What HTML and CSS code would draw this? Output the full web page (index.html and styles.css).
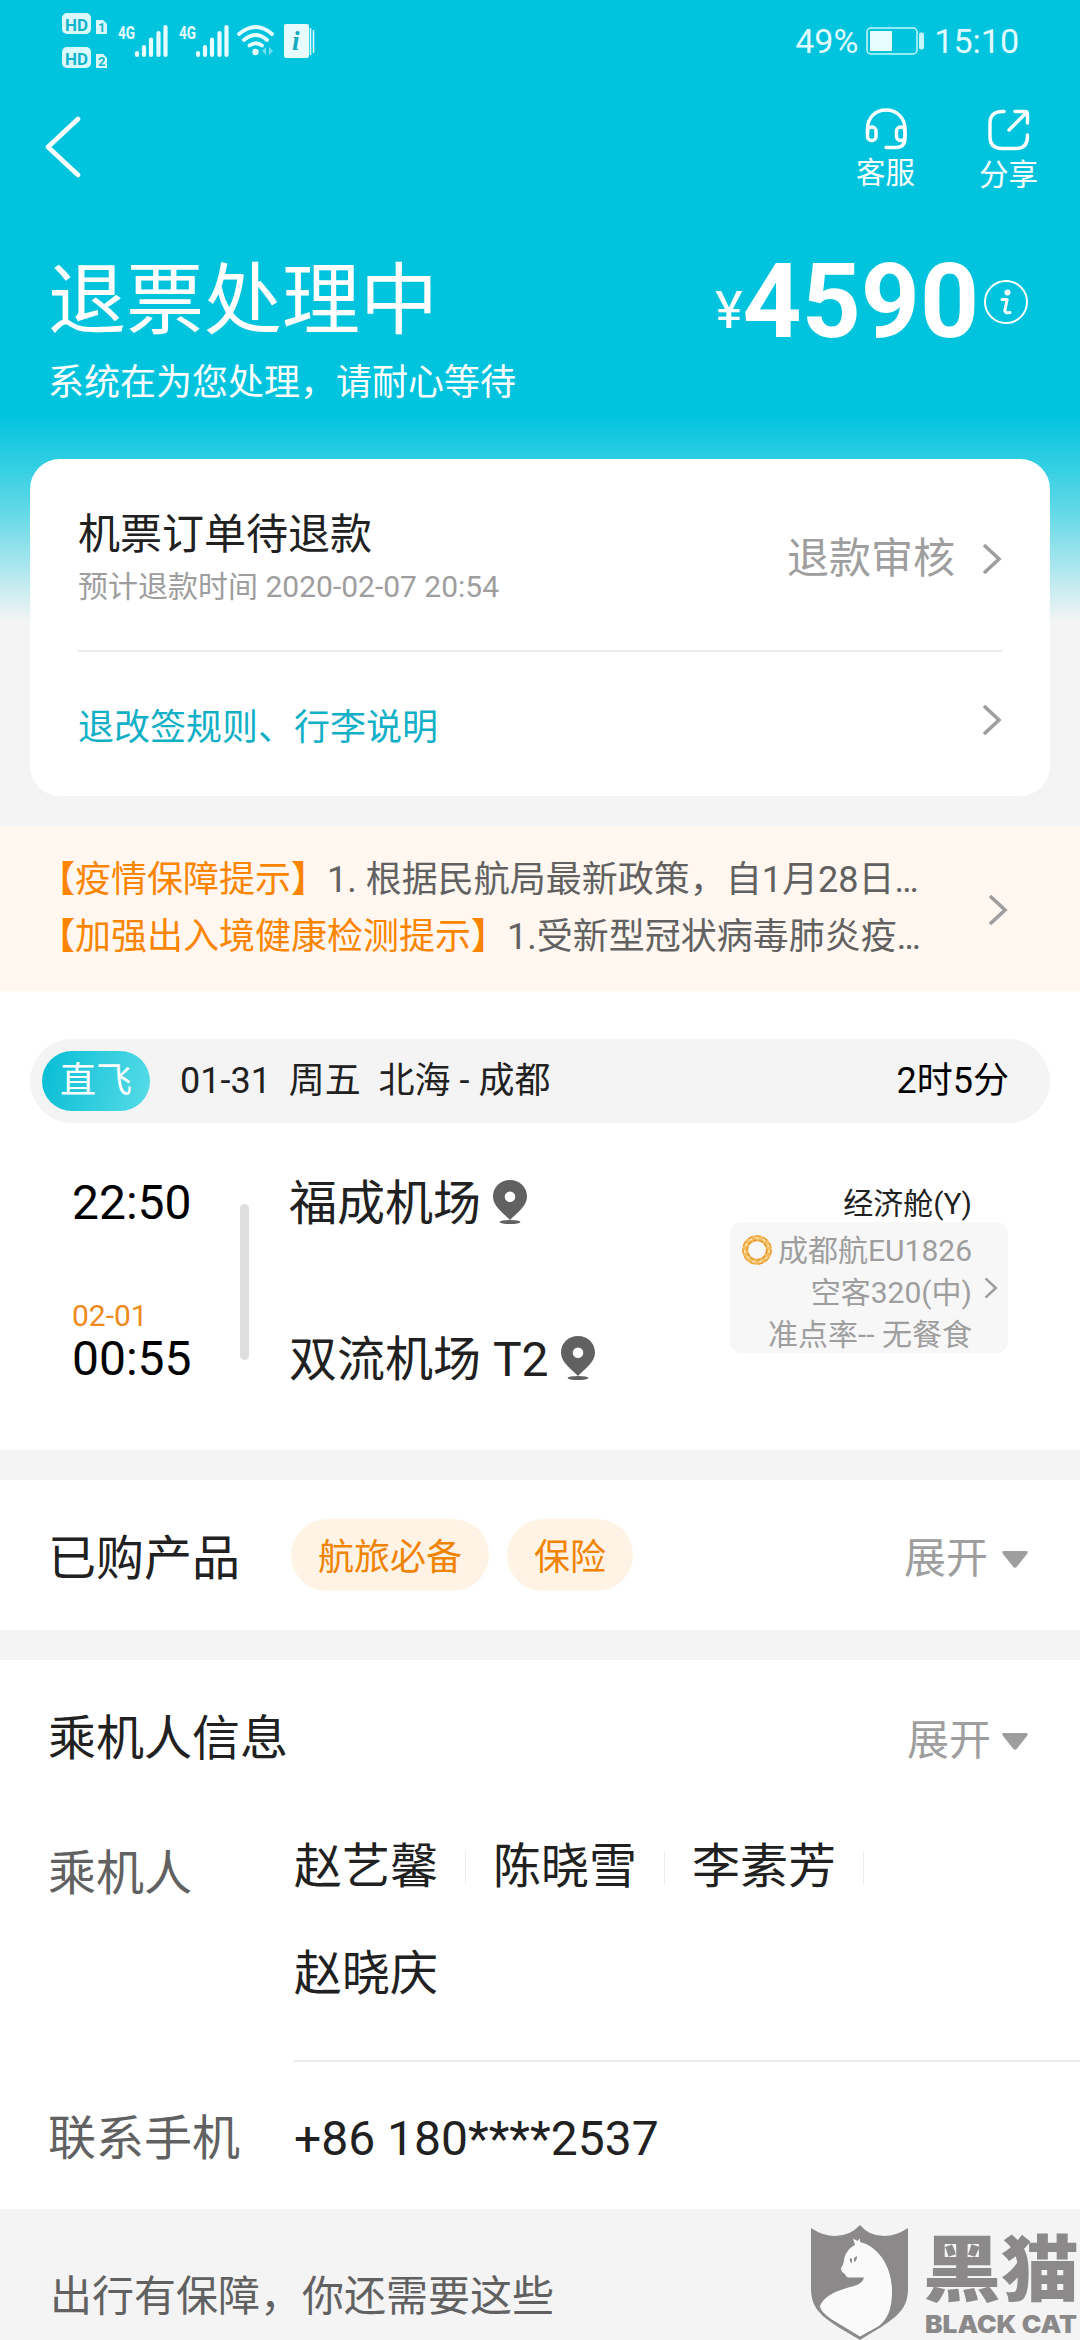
FILE: index.html
```html
<!DOCTYPE html>
<html lang="zh-CN">
<head>
<meta charset="utf-8">
<title>退票处理中</title>
<link rel="stylesheet" href="styles.css">
</head>
<body>
<svg class="defs" width="0" height="0">
  <symbol id="chevron" viewBox="0 0 20 32"><path d="M2 2 L17 16 L2 30" fill="none" stroke="currentColor" stroke-width="3.6"/></symbol>
  <symbol id="pin" viewBox="0 0 34 44"><path fill-rule="evenodd" d="M17 0C7.400 0 0 7.300 0 16.500C0 26 9 32 17 40C25 32 34 26 34 16.500C34 7.300 26.600 0 17 0ZM17 11.500A5.300 5.300 0 1 1 17 22.100A5.300 5.300 0 1 1 17 11.500Z"/><ellipse cx="17" cy="42" rx="10.500" ry="2"/></symbol>
  <symbol id="caret" viewBox="0 0 26 17"><path d="M2 0H24Q27 0 25 3L15 15.500Q13 18 11 15.500L1 3Q-1 0 2 0Z"/></symbol>
</svg>
<main class="page">
  <section class="top">
    <div class="status">
      <svg class="status-icons" viewBox="60 10 258 60" width="258" height="60">
        <g fill="#d9fbff">
          <rect x="62" y="13" width="29" height="21" rx="5"/>
          <rect x="62" y="47" width="29" height="21" rx="5"/>
          <path d="M96 20h7l4 4v10h-11z"/><path d="M96 54h7l4 4v10h-11z"/>
        </g>
        <g class="badge-text"><text x="65" y="30.500" textLength="23" lengthAdjust="spacingAndGlyphs">HD</text><text x="65" y="64.500" textLength="23" lengthAdjust="spacingAndGlyphs">HD</text></g>
        <g class="sim-text"><text x="98" y="32">1</text><text x="98" y="66">2</text></g>
        <g class="net-text"><text x="118" y="38.500" textLength="17" lengthAdjust="spacingAndGlyphs">4G</text><text x="179" y="38.500" textLength="17" lengthAdjust="spacingAndGlyphs">4G</text></g>
        <g stroke="#e6fcff" stroke-width="4.200" stroke-linecap="round">
          <path d="M137 53v2M144 47v8M151 39.500v15.500M158.500 33v22M165.500 27v28"/>
          <path d="M198 53v2M205 47v8M212 39.500v15.500M219.500 33v22M226.500 27v28"/>
        </g>
        <g fill="none" stroke="#e6fcff" stroke-width="3.800" stroke-linecap="round"><path d="M239 34Q256 20 272 34M244 40Q256 30 267 40M249.500 45.500Q256 41 262 45.500"/></g>
        <circle cx="255.500" cy="52" r="3.200" fill="#e6fcff"/>
        <path d="M266 47l-4 4 4 4zM269 47l4 4-4 4z" fill="#6fe0ee"/>
        <rect x="284" y="24" width="25" height="34" rx="2" fill="#e6fcff"/>
        <path d="M310.500 28v27M313.500 30v23" stroke="#e6fcff" stroke-width="1.500"/>
        <text class="info-text" x="292" y="50">i</text>
      </svg>
      <div class="status-right">
        <span>49%</span>
        <svg class="battery" viewBox="0 0 60 28" width="60" height="28"><rect x="1" y="1" width="50" height="26" rx="4" fill="none" stroke="#c4f7fc" stroke-width="1.500"/><rect x="4" y="4" width="22" height="20" fill="#e6fcff"/><rect x="53" y="5.500" width="5" height="17" rx="2" fill="#c4f7fc"/></svg>
        <span>15:10</span>
      </div>
    </div>
    <nav class="nav">
      <svg class="back" viewBox="0 0 36 62" width="36" height="62"><path d="M33 3L3 31L33 59" fill="none" stroke="#fff" stroke-width="4.600" stroke-linecap="round" stroke-linejoin="round"/></svg>
      <div class="actions">
        <div class="action">
          <svg viewBox="0 0 42 42" width="42" height="42"><g fill="none" stroke="#fff" stroke-width="3.400" stroke-linecap="round"><path d="M2.500 25V21C2.500 10 10 2 21 2C32 2 40 10 40 21V30Q40 39.500 31 39.500H21"/><rect x="2.500" y="19" width="8.500" height="13.500" rx="4"/><rect x="31.500" y="19" width="8.500" height="13.500" rx="4"/></g></svg>
          <span>客服</span>
        </div>
        <div class="action share">
          <svg viewBox="0 0 42 42" width="42" height="42"><g fill="none" stroke="#fff" stroke-width="3.400" stroke-linecap="round" stroke-linejoin="round"><path d="M16 2.500H14Q2 2.500 2 14.500V28Q2 39.500 14 39.500H28Q39.500 39.500 39.500 27.500V26"/><path d="M27 2.500H37Q39.500 2.500 39.500 5V14M38.500 3.500L21 21"/></g></svg>
          <span>分享</span>
        </div>
      </div>
    </nav>
    <div class="hero">
      <h1>退票处理中</h1>
      <div class="amount"><span class="yen">¥</span><b>4590</b>
        <svg viewBox="0 0 46 46" width="46" height="46"><circle cx="23" cy="23" r="21" fill="none" stroke="#fff" stroke-width="2"/><circle cx="24.500" cy="13.500" r="3" fill="#fff"/><path d="M19 20.500H24.200L21.800 31.500Q21.500 34.500 27 33.500" fill="none" stroke="#fff" stroke-width="3" stroke-linecap="round" stroke-linejoin="round"/></svg>
      </div>
    </div>
    <p class="subtitle">系统在为您处理，请耐心等待</p>
    <div class="card">
      <div class="refund">
        <div><div class="refund-title">机票订单待退款</div><div class="refund-time">预计退款时间 2020-02-07 20:54</div></div>
        <div class="refund-state">退款审核<svg class="chev"><use href="#chevron"/></svg></div>
      </div>
      <div class="rules"><span>退改签规则、行李说明</span><svg class="chev"><use href="#chevron"/></svg></div>
    </div>
  </section>

  <section class="notice">
    <div>
      <p><em><b>【</b>疫情保障提示<b>】</b></em>1. 根据民航局最新政策，自1月28日…</p>
      <p><em><b>【</b>加强出入境健康检测提示<b>】</b></em>1.受新型冠状病毒肺炎疫…</p>
    </div>
    <svg class="chev"><use href="#chevron"/></svg>
  </section>

  <section class="flight">
    <div class="route"><span class="tag">直飞</span><span class="route-text">01-31&nbsp; 周五&nbsp; 北海 - 成都</span><span class="duration">2时5分</span></div>
    <div class="trip">
      <div class="times"><span class="time">22:50</span><span class="nextday">02-01</span><span class="time">00:55</span></div>
      <div class="bar"></div>
      <div class="airports">
        <div class="airport">福成机场<svg class="pin"><use href="#pin"/></svg></div>
        <div class="airport">双流机场 T2<svg class="pin"><use href="#pin"/></svg></div>
      </div>
      <div class="plane">
        <div class="cabin">经济舱(Y)</div>
        <div class="plane-box">
          <div class="plane-lines">
            <div class="airline"><svg viewBox="0 0 30 30" width="30" height="30"><circle cx="15" cy="15" r="11.800" fill="none" stroke="#f5bd62" stroke-width="6"/><circle cx="15" cy="15" r="14" fill="none" stroke="#e9a035" stroke-width="1.500" stroke-dasharray="5 3"/><circle cx="15" cy="15" r="9.800" fill="none" stroke="#e19a2d" stroke-width="1.500" stroke-dasharray="4 2"/><circle cx="15" cy="15" r="12.200" fill="none" stroke="#fde6b4" stroke-width="1.500" stroke-dasharray="3 4"/></svg>成都航EU1826</div>
            <div>空客320(中)</div>
            <div>准点率-- 无餐食</div>
          </div>
          <svg class="chev-s"><use href="#chevron"/></svg>
        </div>
      </div>
    </div>
  </section>

  <section class="products">
    <h2>已购产品</h2><span class="chip">航旅必备</span><span class="chip">保险</span>
    <span class="expand">展开<svg><use href="#caret"/></svg></span>
  </section>

  <section class="passengers">
    <div class="pax-head"><h2>乘机人信息</h2><span class="expand tight">展开<svg><use href="#caret"/></svg></span></div>
    <div class="field names-row">
      <span class="label">乘机人</span>
      <div class="names"><span class="name">赵艺馨</span><span class="name">陈晓雪</span><span class="name">李素芳</span><span class="name last">赵晓庆</span></div>
    </div>
    <div class="field phone-row"><span class="label">联系手机</span><span class="phone">+86 180****2537</span></div>
  </section>

  <section class="more">出行有保障，你还需要这些</section>

  <div class="watermark">
    <svg viewBox="0 0 97 115" width="97" height="115">
      <path fill="#8b898a" d="M0 3Q12 11 24 11Q39 11 49 0Q58 11 73 11Q85 11 97 3V64C97 88 80 96 49 115C17 96 0 88 0 64Z"/>
      <path fill="#fafafa" d="M42 13.500L46.500 16L49 13.500V17C66 21 81 40 81 66C81 86 76 94 68 101L49 111.500L20 94Q9 86 9 81C15 67 34 64 46 60Q52 57 53 52.500H38Q35 52.500 34 49Q30 47 30 43Q33 39 33 35C34 28 39 22 44 20Z"/>
      <path fill="#8b898a" d="M39 33l2 1v4q-3-1-2-5zM43 33l3-2q0 5-3 6z"/>
    </svg>
    <svg class="brand" viewBox="0 0 155 115" width="155" height="115"><text class="brand-cn" x="-2" y="70" textLength="156" lengthAdjust="spacingAndGlyphs">黑猫</text><text class="brand-en" x="0" y="108" textLength="152" lengthAdjust="spacingAndGlyphs">BLACK CAT</text></svg>
  </div>
</main>
</body>
</html>
```
FILE: styles.css
```css
* { box-sizing: border-box; }
body { margin: 0; font-family: Roboto, "Noto Sans CJK SC", sans-serif; color: #212121; background: #f4f4f4; }
h1, h2, p { margin: 0; font-weight: 400; }
em { font-style: normal; }
svg { flex: none; display: block; }
.defs { position: absolute; }
.page { position: relative; width: 1080px; height: 2340px; overflow: hidden; white-space: nowrap; }

.top { height: 826px; background: linear-gradient(#00c4de 0, #00c4de 415px, #5ad7e7 505px, #f4f4f4 622px); color: #fff; }
.status { height: 82px; padding: 0 61px 0 60px; display: flex; align-items: center; justify-content: space-between; }
.status-icons { margin-bottom: 2px; }
.badge-text { font: 700 17px Roboto, sans-serif; fill: #12b4cb; }
.sim-text { font: 700 13px Roboto, sans-serif; fill: #12b4cb; }
.net-text { font: 700 19px Roboto, sans-serif; fill: #e6fcff; }
.info-text { font: italic 700 27px "Liberation Serif", serif; fill: #12a9bf; }
.status-right { display: flex; align-items: center; font-size: 34px; line-height: 40px; color: #e0fbff; }
.battery { margin: 0 8px 0 8px; }

.nav { height: 138px; padding: 0 42px 0 45px; display: flex; justify-content: space-between; }
.back { margin-top: 34px; }
.actions { display: flex; gap: 64px; margin-top: 26px; }
.action { display: flex; flex-direction: column; align-items: center; font-size: 29.500px; line-height: 34px; gap: 6px; }
.action svg { margin-left: 2px; }
.share { padding-top: 1px; gap: 7px; }

.hero { height: 100px; margin-top: 32px; padding: 0 51px 0 48px; display: flex; align-items: center; justify-content: space-between; }
.hero h1 { font-size: 78px; line-height: 100px; }
.amount { display: flex; align-items: center; line-height: 100px; }
.amount b { font-size: 103px; }
.yen { font-size: 52px; margin-top: 18px; }
.amount svg { margin-left: 4px; }
.subtitle { font-size: 36px; line-height: 50px; margin-top: 6px; padding-left: 48px; }

.card { height: 337px; margin: 51px 30px 0; padding: 0 48px 0 48px; border-radius: 30px; background: #fff; color: #212121; }
.refund { height: 193px; padding-top: 10px; display: flex; align-items: center; justify-content: space-between; border-bottom: 2px solid #ebebeb; }
.refund-title { font-size: 42px; line-height: 54px; }
.refund-time { font-size: 30px; line-height: 50px; color: #9e9e9e; }
.refund-state { display: flex; align-items: center; gap: 27px; margin-top: -2px; font-size: 42px; line-height: 50px; color: #9e9e9e; }
.chev { width: 20px; height: 32px; color: #9e9e9e; }
.rules { height: 144px; display: flex; align-items: center; justify-content: space-between; font-size: 36px; color: #12b0c6; }
.rules span { line-height: 50px; margin-top: 7px; }
.rules .chev { margin-bottom: 8px; }

.notice { height: 165px; padding: 26px 72px 0 39px; display: flex; justify-content: space-between; background: #fff7f0; color: #616161; font-size: 36px; line-height: 57px; }
.notice em { color: #fb8500; }
.notice .chev { margin-top: 42px; }

.flight { height: 459px; padding: 48px 30px 0; background: #fff; }
.route { height: 84px; padding: 0 41px 0 12px; border-radius: 42px; background: #f4f4f4; display: flex; align-items: center; font-size: 36px; line-height: 50px; }
.tag { width: 108px; height: 60px; border-radius: 30px; line-height: 60px; text-align: center; color: #fff; background: linear-gradient(105deg, #06bdd4, #58dce8); }
.route-text { margin-left: 30px; }
.duration { margin-left: auto; color: #000; }
.trip { display: flex; padding: 50px 42px 0 42px; }
.times { width: 168px; display: flex; flex-direction: column; }
.time { font-size: 48px; line-height: 60px; color: #000; }
.nextday { margin-top: 62px; font-size: 30px; line-height: 42px; margin-bottom: -8px; color: #ee8a1c; }
.bar { width: 9px; height: 156px; margin-top: 31px; border-radius: 5px; background: #dedede; }
.airports { margin-left: 40px; font-size: 48px; line-height: 60px; display: flex; flex-direction: column; gap: 96px; }
.airport { display: flex; align-items: center; height: 60px; margin-top: 1px; }
.pin { width: 34px; height: 44px; margin: 0 0 4px 12px; fill: #616161; }
.airport + .airport { margin-top: 0; }
.plane { margin-left: auto; width: 278px; font-size: 30px; line-height: 42px; }
.cabin { height: 49px; padding: 10px 36px 0 0; text-align: right; }
.plane-box { height: 131px; padding: 8px 10px 0 0; border-radius: 12px; background: #f7f7f7; color: #9e9e9e; display: flex; justify-content: flex-end; }
.plane-lines { text-align: right; }
.airline { display: flex; gap: 6px; align-items: center; }
.airline svg { margin-bottom: 2px; }
.chev-s { width: 14px; height: 22px; margin: 47px 0 0 12px; color: #9e9e9e; }

.products { margin-top: 30px; height: 150px; padding: 0 52px 0 48px; background: #fff; display: flex; align-items: center; }
h2 { font-size: 48px; line-height: 60px; margin-top: 7px; }
.products h2 { width: 243px; }
.chip { height: 72px; padding: 0 27px; margin-right: 18px; border-radius: 36px; background: #fff3e5; color: #f08300; font-size: 36px; line-height: 78px; }
.expand { margin-left: auto; display: flex; align-items: center; gap: 14px; margin-top: 8px; color: #9e9e9e; font-size: 42px; line-height: 50px; }
.expand.tight { gap: 11px; }
.expand svg { width: 26px; height: 17px; margin-top: 1px; fill: #9e9e9e; }

.passengers { margin-top: 30px; height: 549px; background: #fff; }
.pax-head { height: 158px; padding: 0 52px 0 48px; display: flex; align-items: center; }
.pax-head h2 { margin-top: 0; }
.pax-head .expand { margin-top: 3px; }
.field { display: flex; padding-left: 48px; font-size: 48px; }
.label { width: 246px; color: #616161; line-height: 60px; }
.names-row { height: 242px; }
.names-row .label { margin-top: 26px; }
.names { width: 740px; padding-top: 19px; display: flex; flex-wrap: wrap; align-content: flex-start; row-gap: 47px; }
.name { line-height: 60px; width: 199px; display: flex; align-items: center; justify-content: space-between; padding-right: 27px; }
.name::after { content: ""; width: 1px; height: 33px; background: #ebebeb; }
.name.last::after { content: none; }
.phone-row { margin-left: 294px; padding-left: 0; border-top: 2px solid #ebebeb; }
.phone-row .label { margin-left: -246px; margin-top: 47px; }
.phone { line-height: 60px; margin-top: 47px; }

.more { height: 131px; padding: 58px 0 0 50px; font-size: 42px; line-height: 60px; color: #616161; background: #f4f4f4; }

.watermark { position: absolute; left: 811px; top: 2225px; display: flex; gap: 17px; }
.brand { fill: #8b898a; overflow: visible; }
.brand-cn { font: 900 72px "Noto Sans CJK SC", sans-serif; }
.brand-en { font: 900 24px Inter, "Liberation Sans", sans-serif; }
```
